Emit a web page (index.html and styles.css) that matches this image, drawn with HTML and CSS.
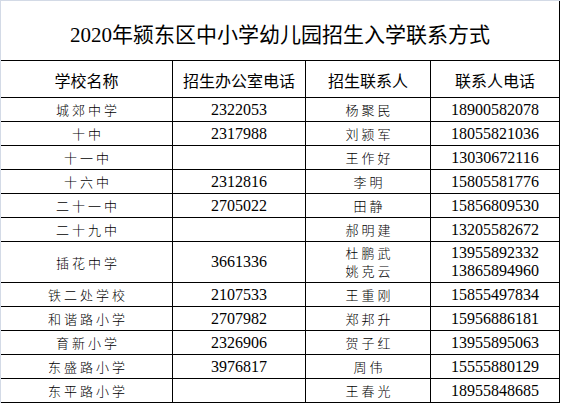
FILE: index.html
```html
<!DOCTYPE html>
<html lang="zh-CN">
<head>
<meta charset="utf-8">
<title>2020年颍东区中小学幼儿园招生入学联系方式</title>
<link rel="stylesheet" href="styles.css">
</head>
<body>
<div class="sheet">
  <div class="grid">
    <div class="cell title">2020年颍东区中小学幼儿园招生入学联系方式</div>

    <div class="cell head">学校名称</div>
    <div class="cell head">招生办公室电话</div>
    <div class="cell head">招生联系人</div>
    <div class="cell head">联系人电话</div>

    <div class="cell name">城郊中学</div>
    <div class="cell num">2322053</div>
    <div class="cell name">杨聚民</div>
    <div class="cell num">18900582078</div>

    <div class="cell name">十中</div>
    <div class="cell num">2317988</div>
    <div class="cell name">刘颍军</div>
    <div class="cell num">18055821036</div>

    <div class="cell name">十一中</div>
    <div class="cell num"></div>
    <div class="cell name">王作好</div>
    <div class="cell num">13030672116</div>

    <div class="cell name">十六中</div>
    <div class="cell num">2312816</div>
    <div class="cell name">李明</div>
    <div class="cell num">15805581776</div>

    <div class="cell name">二十一中</div>
    <div class="cell num">2705022</div>
    <div class="cell name">田静</div>
    <div class="cell num">15856809530</div>

    <div class="cell name">二十九中</div>
    <div class="cell num"></div>
    <div class="cell name">郝明建</div>
    <div class="cell num">13205582672</div>

    <div class="cell name">插花中学</div>
    <div class="cell num">3661336</div>
    <div class="cell name multi"><span>杜鹏武</span><span>姚克云</span></div>
    <div class="cell num multi"><span>13955892332</span><span>13865894960</span></div>

    <div class="cell name">铁二处学校</div>
    <div class="cell num">2107533</div>
    <div class="cell name">王重刚</div>
    <div class="cell num">15855497834</div>

    <div class="cell name">和谐路小学</div>
    <div class="cell num">2707982</div>
    <div class="cell name">郑邦升</div>
    <div class="cell num">15956886181</div>

    <div class="cell name">育新小学</div>
    <div class="cell num">2326906</div>
    <div class="cell name">贺子红</div>
    <div class="cell num">13955895063</div>

    <div class="cell name">东盛路小学</div>
    <div class="cell num">3976817</div>
    <div class="cell name">周伟</div>
    <div class="cell num">15555880129</div>

    <div class="cell name">东平路小学</div>
    <div class="cell num"></div>
    <div class="cell name">王春光</div>
    <div class="cell num">18955848685</div>
  </div>
</div>
</body>
</html>
```

FILE: styles.css
```css
html, body {
  margin: 0;
  padding: 0;
  background: #ffffff;
}

.sheet {
  display: inline-block;
  border-top: 1px solid #d3dae6;
  border-left: 1px solid #d3dae6;
  color: #000000;
}

.grid {
  display: grid;
  grid-template-columns: 172px 133px 125px 129px;
  grid-template-rows: 60px 37px repeat(6, 24px) 41px repeat(5, 24px);
}

.cell {
  box-sizing: border-box;
  border-right: 1px solid #000000;
  border-bottom: 1px solid #000000;
  display: flex;
  align-items: center;
  justify-content: center;
  white-space: nowrap;
}

.title {
  grid-column: 1 / span 4;
  font-family: "Liberation Serif", "Noto Sans CJK SC", serif;
  font-size: 21px;
  padding-top: 4px;
}

.head {
  font-family: "Liberation Serif", "Noto Sans CJK SC", serif;
  font-size: 16px;
  padding-top: 1px;
}

.name {
  font-family: "Noto Sans CJK SC", sans-serif;
  font-size: 13px;
  font-weight: 300;
  letter-spacing: 3px;
  padding-left: 3px;
}

.num {
  font-family: "Liberation Serif", serif;
  font-size: 16px;
}

.multi {
  flex-direction: column;
  line-height: 18px;
}
```
